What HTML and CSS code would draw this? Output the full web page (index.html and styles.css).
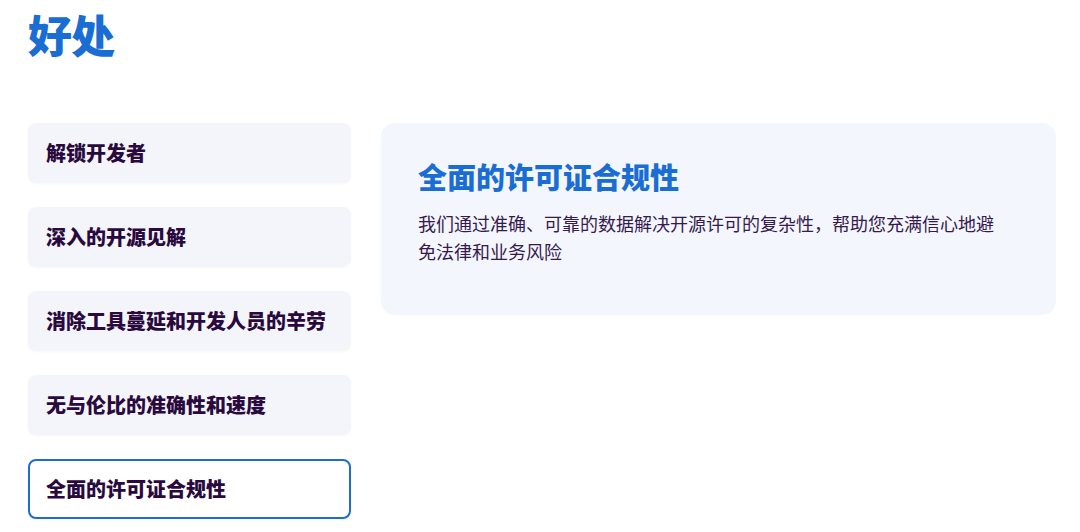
FILE: index.html
```html
<!DOCTYPE html>
<html lang="zh-CN">
<head>
<meta charset="utf-8">
<link rel="stylesheet" href="styles.css">
</head>
<body>
<main class="page">
  <h1 class="title">好处</h1>
  <div class="content">
    <ul class="tabs">
      <li class="tab">解锁开发者</li>
      <li class="tab">深入的开源见解</li>
      <li class="tab">消除工具蔓延和开发人员的辛劳</li>
      <li class="tab">无与伦比的准确性和速度</li>
      <li class="tab active">全面的许可证合规性</li>
    </ul>
    <section class="panel">
      <h2 class="panel-title">全面的许可证合规性</h2>
      <p class="panel-text">我们通过准确、可靠的数据解决开源许可的复杂性，帮助您充满信心地避免法律和业务风险</p>
    </section>
  </div>
</main>
</body>
</html>
```
FILE: styles.css
```css
* { box-sizing: border-box; }
html, body { margin: 0; padding: 0; background: #ffffff; }
body {
  font-family: "Noto Sans CJK SC", "Noto Sans", sans-serif;
  width: 1080px;
  height: 532px;
  overflow: hidden;
}
.page { padding: 4px 0 0 28px; }
.title {
  margin: 0;
  font-size: 44px;
  line-height: 60px;
  font-weight: 900;
  color: #1a6dd2;
  letter-spacing: -1px;
}
.content {
  display: flex;
  gap: 30px;
  margin-top: 59px;
  align-items: flex-start;
}
.tabs {
  list-style: none;
  margin: 0;
  padding: 0;
  width: 323px;
  display: flex;
  flex-direction: column;
  gap: 24px;
}
.tab {
  height: 60px;
  display: flex;
  align-items: center;
  padding-left: 16px;
  padding-bottom: 1px;
  background: #f3f5fb;
  border: 2px solid transparent;
  border-radius: 8px;
  font-size: 20px;
  font-weight: 900;
  color: #2a0a3e;
  box-shadow: 0 1px 2px rgba(40, 40, 90, 0.04);
}
.tab.active {
  background: #ffffff;
  border-color: #1d6cd0;
}
.panel {
  width: 675px;
  height: 192px;
  background: #f3f6fc;
  border-radius: 14px;
  padding: 30px 37px 0 37px;
}
.panel-title {
  margin: 0;
  font-size: 29px;
  line-height: 46px;
  font-weight: 900;
  color: #1a6dd2;
}
.panel-text {
  margin: 10px 0 0 0;
  max-width: 590px;
  font-size: 18px;
  line-height: 28px;
  font-weight: 400;
  color: #361a4c;
}
```
